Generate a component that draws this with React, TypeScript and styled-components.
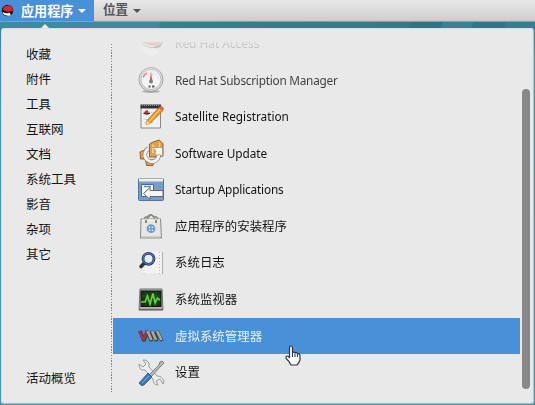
import React from "react";
import styled, { createGlobalStyle } from "styled-components";

const Global = createGlobalStyle`
  * { box-sizing: border-box; }
  body { margin: 0; overflow: hidden; }
`;

const Desktop = styled.div`
  width: 535px;
  height: 405px;
  display: flex;
  flex-direction: column;
  overflow: hidden;
  color: #141414;
  font-family: "Noto Sans", "Noto Sans CJK SC", sans-serif;
  background: linear-gradient(180deg, #2f7890 0, #35809a 28px, #4a93b4 60px, #4797b4 100%);
`;

const TopBar = styled.header`
  flex: none;
  display: flex;
  height: 22px;
  background: linear-gradient(#e8e8e8, #cfcfcf 20px, #c0c0c0 21px, #777 22px);
`;

const TopButton = styled.div<{ $active?: boolean }>`
  display: flex;
  align-items: center;
  height: ${(p) => (p.$active ? "21px" : "20px")};
  width: ${(p) => (p.$active ? "94px" : "60px")};
  padding-left: ${(p) => (p.$active ? "1px" : "9px")};
  color: ${(p) => (p.$active ? "#fff" : "#555")};
  background: ${(p) => (p.$active ? "#4a90d9" : "transparent")};
  font-size: ${(p) => (p.$active ? "13.1px" : "12.6px")};
  font-weight: 700;
  line-height: 20px;
  white-space: nowrap;
`;

const HatSlot = styled.span`
  display: flex;
  width: 20px;
`;

const Caret = styled.span`
  margin: 1px 0 0 5px;
  border: 4px solid transparent;
  border-top-color: currentColor;
  border-bottom: 0;
`;

const Wallpaper = styled.div`
  flex: none;
  position: relative;
  height: 6px;
  background: linear-gradient(110deg, #3d8ba0 0, #3d8ba0 150px, #367f95 152px, #34798f 385px, #2e738a 387px, #2e738a 415px, #37819a 417px, #37819a 444px, #30758d 446px, #30758d 475px, #357d96 477px);
`;

const Pointer = styled.i`
  position: absolute;
  left: 41px;
  top: 2px;
  border: 4.5px solid transparent;
  border-top: 0;
  border-bottom-color: #e9e9e9;
`;

const Panel = styled.main`
  display: flex;
  width: 533px;
  height: 376px;
  margin-left: 1px;
  padding-top: 13px;
  border: 1px solid #dcdcdc;
  border-right-color: #bdbdbd;
  border-bottom-color: #b4b4b4;
  border-radius: 3px;
  background: #e9e9e9;
`;

const Sidebar = styled.nav`
  display: flex;
  flex-direction: column;
  width: 109px;
  height: 349px;
  padding-left: 24px;
  font-size: 12.5px;
`;

const Category = styled.div<{ $bottom?: boolean }>`
  height: 25px;
  line-height: 25px;
  white-space: nowrap;
  margin-top: ${(p) => (p.$bottom ? "auto" : "0")};
`;

const Divider = styled.div`
  width: 1px;
  height: 348px;
  margin-top: 2px;
  background: repeating-linear-gradient(#858585 0 1.4px, #e9e9e9 1.4px 2.8px);
`;

const AppList = styled.section`
  width: 407px;
  height: 351px;
  margin-left: 1px;
  overflow: hidden;
  mask-image: linear-gradient(rgba(0, 0, 0, 0.1) 0, rgba(0, 0, 0, 0.22) 8px, rgba(0, 0, 0, 0.75) 34px, rgba(0, 0, 0, 0.85) 44px, #000 64px);
`;

const AppRows = styled.div`
  margin-top: -16.8px;
`;

const AppRow = styled.div<{ $selected?: boolean }>`
  display: flex;
  align-items: center;
  height: 36.58px;
  padding-left: 24px;
  color: ${(p) => (p.$selected ? "#e9f1fa" : "inherit")};
  background: ${(p) => (p.$selected ? "#4a90d9" : "transparent")};
`;

const AppName = styled.span<{ $spacing: number; $latin: boolean }>`
  margin: ${(p) => (p.$latin ? -1 : 1)}px 0 0 10px;
  font-size: ${(p) => (p.$latin ? 11.8 : 12.45)}px;
  line-height: 18px;
  letter-spacing: ${(p) => p.$spacing}px;
  white-space: nowrap;
`;

const Icon = styled.svg`
  display: block;
  flex: none;
`;

const ScrollThumb = styled.div`
  width: 8px;
  height: 300px;
  margin: 47px 0 0 2px;
  border-radius: 4px;
  background: #888;
`;

const Cursor = styled.svg`
  position: absolute;
  left: 285px;
  top: 345px;
`;

const Hat = ({ size = 28 }: { size?: number }) => (
  <Icon width={size} height={size} viewBox="0 0 28 28">
    <circle cx="14" cy="14" r="12.5" fill={size < 20 ? "#151515" : "#f4f4f4"} />
    <path d="M4 12Q6 2 13 4Q19 0 24 8L26 14Q20 18 12 16Q7 15 4 12" fill="#d82631" />
    <path d="M3 13Q8 18 16 18L25 14Q25 20 18 19Q8 19 3 13" fill="#242424" />
    <path d="M4 17Q10 22 19 19L21 24Q10 28 4 20Z" fill="#fff" />
  </Icon>
);

const Gauge = () => (
  <Icon width="28" height="28" viewBox="0 0 28 28">
    <ellipse cx="14" cy="25.5" rx="9" ry="1.5" fill="#aaa" />
    <circle cx="14" cy="13.5" r="12" fill="#d9d9d9" stroke="#8f8f8f" />
    <circle cx="14" cy="13.5" r="10" fill="#f7f7f7" stroke="#b4b4b4" />
    <path d="M6.5 14A7.6 7.6 0 0 1 21.5 14" fill="none" stroke="#ccc" strokeDasharray="1 2" />
    <path d="M6 11.5Q7.5 8 10 7" fill="none" stroke="#ef5d5d" strokeWidth="1.5" />
    <path d="M14 5L12.7 15H15.3Z" fill="#e42b2b" />
    <circle cx="14" cy="15.5" r="2" fill="#666" />
    <path d="M11.5 20.5h2M15 20.5h2.5" stroke="#444" strokeWidth="1.8" />
  </Icon>
);

const Registration = () => (
  <Icon width="28" height="28" viewBox="0 0 28 28">
    <path d="M4 3H23.5V25H4Z" fill="#f1f1f1" stroke="#888" />
    <path d="M3.5 1.5H24V5.5H3.5Z" fill="#333" />
    <path d="M5 2.5H23" stroke="#999" strokeDasharray="1 1" />
    <path d="M7 10.5Q8 6.5 11 7.5L12 10.5Z" fill="#df2734" />
    <path d="M6.5 10Q10 12 13 10" fill="none" stroke="#222" strokeWidth="1.4" />
    <path d="M14 9.5h4M7 16.5h8M7 19.5h10" stroke="#d1d1d1" />
    <path d="M9 21.5L10 17.5L22 4.5L26 7.5L13 20.5Z" fill="#f39424" stroke="#a56119" strokeWidth=".7" />
    <path d="M12 18.5L23 6.5" stroke="#ffc476" strokeWidth="1.2" />
    <path d="M22 4.5L24 2.5L27 5.5L26 7.5Z" fill="#ec565b" />
    <path d="M9 21.5L10 17.5L13 20.5Z" fill="#efd6a2" />
  </Icon>
);

const Update = () => (
  <Icon width="28" height="28" viewBox="0 0 28 28">
    <g fill="#e2a04a" stroke="#94622c">
      <path d="M12.5 5L15 3.5L22 1L26 4.5V17L19 18H12.5Z" />
      <path d="M3 13L6 11.5L9 12V20H3.5Z" />
      <path d="M8.5 21H17L16 26.5H9.5Z" />
    </g>
    <path d="M16 5.5V14M22.5 4V8" stroke="#ffe0a4" strokeWidth="1.3" fill="none" />
    <path d="M11.5 9.5A7 7 0 1 0 20.8 12" fill="none" stroke="#858585" strokeWidth="4.4" />
    <path d="M11.5 9.5A7 7 0 1 0 20.8 12" fill="none" stroke="#f4f4f2" strokeWidth="3" />
    <path d="M15.5 8.5H25.5V18L22.5 15L20 16.5L17.8 14.5L19 12Z" fill="#f5f5f2" stroke="#858585" strokeWidth=".6" />
  </Icon>
);

const Startup = () => (
  <Icon width="28" height="28" viewBox="0 0 28 28">
    <rect x="1.5" y="2.5" width="25" height="22" rx="1" fill="#729fcf" stroke="#50759d" />
    <path d="M2 4H26" stroke="#f1f1df" strokeWidth="3" />
    <path d="M4.5 8.5H16.5V20.5H4.5Z" fill="#fff" stroke="#416b9e" />
    <path d="M7 10.5H14" stroke="#6788ac" strokeWidth="1.5" />
    <path d="M6.5 17.5L13 11.5V14.5H26V20.5H13V23.5Z" fill="#f5f5f5" stroke="#666" />
  </Icon>
);

const Installer = () => (
  <Icon width="28" height="28" viewBox="0 0 28 28">
    <path d="M7 7Q8 4 12 5Q13 1 17 5Q20 4 21 7" fill="none" stroke="#7d8180" strokeWidth="1.3" />
    <path d="M9 10L11 4Q14 1.5 16 4L19 10" fill="none" stroke="#8a8e8d" strokeWidth="1.4" />
    <path d="M4 7H23.5L24.5 26H3.5Z" fill="#e6e7e3" stroke="#8e928e" strokeWidth="1.1" />
    <path d="M5 8H23" stroke="#fff" />
    <path d="M9 8v3M19 8v3" stroke="#888" strokeWidth="2" />
    <circle cx="14" cy="16.7" r="4.4" fill="#6f9cd4" />
    <path d="M12.5 15.2h.1m2.8 0h.1m-3 3h.1m2.8 0h.1" stroke="#f3f6fa" strokeWidth="1.5" strokeLinecap="round" />
    <path d="M4 24.5H24" stroke="#cfcfca" />
  </Icon>
);

const Logs = () => (
  <Icon width="28" height="28" viewBox="0 0 28 28">
    <path d="M5 2H25V25H5Z" fill="#f4f4f4" stroke="#e4e4e4" />
    <path d="M25.5 3V25" stroke="#b0b0b0" />
    <path d="M7 3V25M22.5 3V25" stroke="#bbb" strokeDasharray="1 2" />
    <path d="M7 14.5L4 17.5" stroke="#333" strokeWidth="3.6" strokeLinecap="round" />
    <circle cx="11.5" cy="9.8" r="5.5" fill="#e6ebf2" stroke="#253976" strokeWidth="2.8" />
    <circle cx="11.5" cy="9.8" r="5.5" fill="none" stroke="#5272b5" strokeWidth="1.2" />
  </Icon>
);

const Monitor = () => (
  <Icon width="28" height="28" viewBox="0 0 28 28">
    <path d="M3 3H25L26 24H2Z" fill="#b9b9b9" stroke="#707070" />
    <rect x="4" y="5" width="20" height="15.5" fill="#153516" stroke="#111" />
    <path d="M5 10H23M5 15H23M9 6V20M14 6V20M19 6V20" stroke="#2d742a" strokeWidth=".6" />
    <path d="M4 16H8L10.5 10L13 18L16 7.5L18 17L20.5 12L23 14" fill="none" stroke="#65cf35" strokeWidth="1.7" />
    <path d="M2 23.5H26" stroke="#696969" strokeWidth="1.5" />
  </Icon>
);

const Machines = () => (
  <Icon width="28" height="28" viewBox="0 0 28 28">
    <g fill="none" strokeLinejoin="bevel">
      <path d="M3 9L7 19L10 9L14.5 19L15 9L19.5 19L20 9L25 19" stroke="#3d4649" strokeWidth="3.6" />
      <path d="M2 9L6.5 18L9.5 9" stroke="#a63547" strokeWidth="2.2" />
      <path d="M10.5 9L14.5 18M15 9L19 18M20 9L24.5 18" stroke="#a4a9a8" strokeWidth="2.6" />
    </g>
  </Icon>
);

const Settings = () => (
  <Icon width="28" height="28" viewBox="0 0 28 28">
    <path d="M2 5L6 8L9 5L6 1Q9 0 12 4V8L20 17Q25 17 27 22L26 25L23 20L19 22L21 26Q16 26 16 20L8 11Q2 12 2 5Z" fill="#eee" stroke="#969a96" />
    <path d="M12 16L22 6L23 3L25 2L27 4L25 6L23 8L14 18Z" fill="#b6babb" stroke="#717576" strokeWidth=".9" />
    <path d="M2 24L11 14L15 18L7 26Q4 28 2 24Z" fill="#3e78b5" stroke="#2f5688" strokeWidth=".8" />
    <path d="M5 24L12 17" stroke="#7db0dc" />
  </Icon>
);

const categories = ["收藏", "附件", "工具", "互联网", "文档", "系统工具", "影音", "杂项", "其它"];

const apps = [
  { name: "Red Hat Access", icon: <Hat />, spacing: 0.04, latin: true },
  { name: "Red Hat Subscription Manager", icon: <Gauge />, spacing: -0.24, latin: true },
  { name: "Satellite Registration", icon: <Registration />, spacing: -0.02, latin: true },
  { name: "Software Update", icon: <Update />, spacing: -0.05, latin: true },
  { name: "Startup Applications", icon: <Startup />, spacing: -0.17, latin: true },
  { name: "应用程序的安装程序", icon: <Installer /> },
  { name: "系统日志", icon: <Logs /> },
  { name: "系统监视器", icon: <Monitor /> },
  { name: "虚拟系统管理器", icon: <Machines />, selected: true },
  { name: "设置", icon: <Settings /> },
];

export default function App() {
  return (
    <Desktop>
      <Global />
      <TopBar>
        <TopButton $active>
          <HatSlot><Hat size={13} /></HatSlot>
          应用程序<Caret />
        </TopButton>
        <TopButton>位置<Caret /></TopButton>
      </TopBar>
      <Wallpaper><Pointer /></Wallpaper>
      <Panel>
        <Sidebar>
          {categories.map((c) => <Category key={c}>{c}</Category>)}
          <Category $bottom>活动概览</Category>
        </Sidebar>
        <Divider />
        <AppList>
          <AppRows>
            {apps.map((a) => (
              <AppRow key={a.name} $selected={a.selected}>
                {a.icon}
                <AppName $spacing={a.spacing ?? 0} $latin={!!a.latin}>{a.name}</AppName>
              </AppRow>
            ))}
          </AppRows>
        </AppList>
        <ScrollThumb />
      </Panel>
      <Cursor width="17" height="22" viewBox="0 0 17 22">
        <path d="M4.5 11V3Q4.5 1 6 1T7.5 3V8Q8 6.5 10 7.5Q12 7 12.3 8.8Q15 8 15 11V15Q14 18 12 20H6Q5 17 1.2 13.5Q.5 11 2 11Q3.5 11 4.5 13Z" fill="#fff" stroke="#29384a" strokeWidth="1.2" />
        <path d="M7.5 8V12M10 8V12M12.4 9V12" stroke="#29384a" />
      </Cursor>
    </Desktop>
  );
}
